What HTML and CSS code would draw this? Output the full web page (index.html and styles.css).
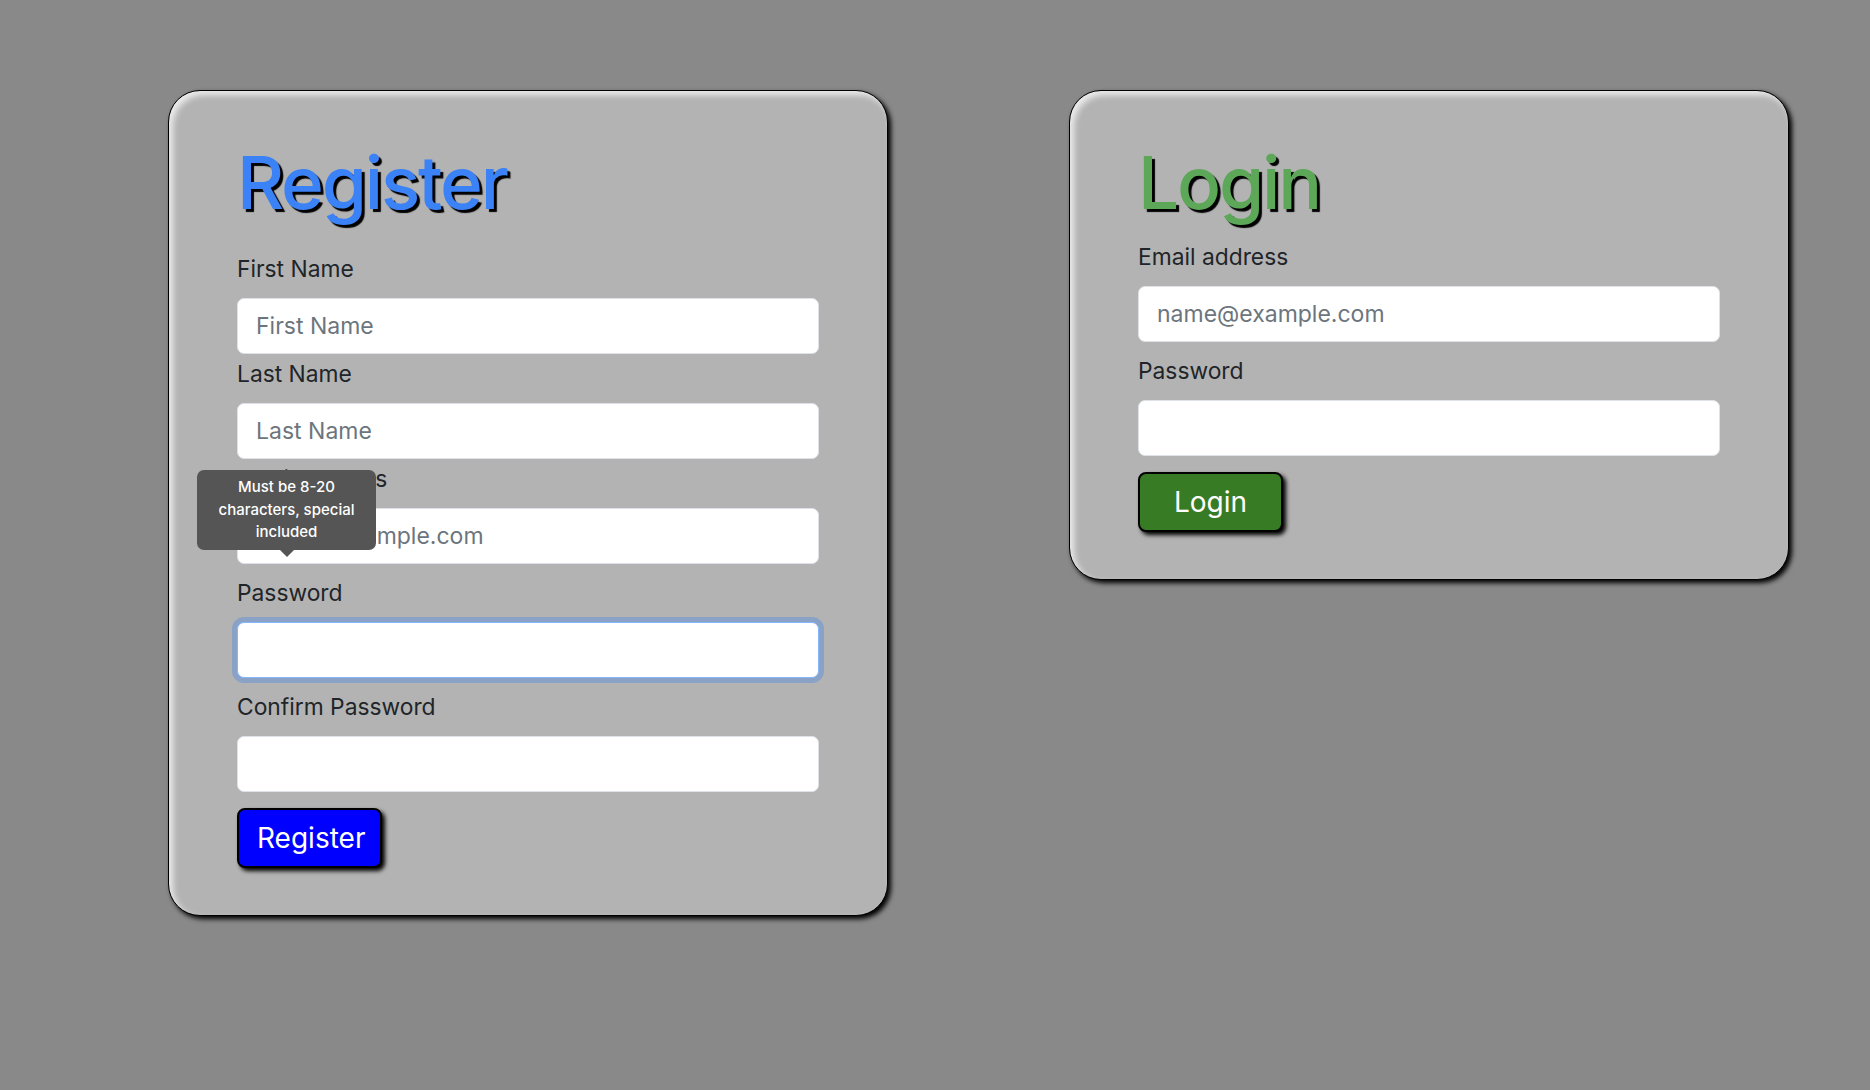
FILE: index.html
```html
<!DOCTYPE html>
<html lang="en">
<head>
<meta charset="utf-8">
<title>Register / Login</title>
<link rel="stylesheet" href="styles.css">
</head>
<body>
<main class="page">
  <section class="card card-register">
    <h1 class="title title-register">Register</h1>
    <form class="form">
      <div class="field field-tight">
        <label class="label" for="fn">First Name</label>
        <input class="input" id="fn" type="text" placeholder="First Name">
      </div>
      <div class="field field-tight">
        <label class="label" for="ln">Last Name</label>
        <input class="input" id="ln" type="text" placeholder="Last Name">
      </div>
      <div class="field">
        <label class="label" for="em">Email address</label>
        <input class="input" id="em" type="email" placeholder="name@example.com">
      </div>
      <div class="field">
        <label class="label" for="pw">Password</label>
        <input class="input input-focus" id="pw" type="password">
      </div>
      <div class="field field-last">
        <label class="label" for="cpw">Confirm Password</label>
        <input class="input" id="cpw" type="password">
      </div>
      <button class="btn btn-blue" type="button">Register</button>
    </form>
    <div class="tooltip">Must be 8-20 characters, special included</div>
  </section>

  <section class="card card-login">
    <h1 class="title title-login">Login</h1>
    <form class="form">
      <div class="field">
        <label class="label" for="lem">Email address</label>
        <input class="input" id="lem" type="email" placeholder="name@example.com">
      </div>
      <div class="field field-last">
        <label class="label" for="lpw">Password</label>
        <input class="input" id="lpw" type="password">
      </div>
      <button class="btn btn-green" type="button">Login</button>
    </form>
  </section>
</main>
</body>
</html>
```

FILE: styles.css
```css
* {
  box-sizing: border-box;
}

html, body {
  margin: 0;
  padding: 0;
}

body {
  background: #898989;
  font-family: Inter, "Noto Sans", "Liberation Sans", sans-serif;
  color: #212529;
  width: 1870px;
  height: 1090px;
  overflow: hidden;
}

.page {
  display: flex;
  align-items: flex-start;
  gap: 181px;
  padding: 90px 0 0 168px;
}

.card {
  position: relative;
  width: 720px;
  background: #b3b3b3;
  border: 1px solid #000;
  border-radius: 32px;
  padding: 47px 68px 47px;
  box-shadow: 3px 3px 5px #000, inset 4px 4px 6px rgba(255, 255, 255, 0.75);
}

.title {
  margin: 0;
  font-size: 73px;
  line-height: 89px;
  font-weight: 500;
  letter-spacing: -2.2px;
  text-shadow: 3px 3px 1px #000;
}

.title-register {
  color: #3b82f6;
  margin-bottom: 25px;
}

.title-login {
  color: #5ca858;
  margin-bottom: 13px;
}

.form {
  display: flex;
  flex-direction: column;
  align-items: flex-start;
}

.field {
  width: 100%;
  display: flex;
  flex-direction: column;
  margin-bottom: 12px;
}

.field-tight {
  margin-bottom: 3px;
}

.field-last {
  margin-bottom: 16px;
}

.label {
  font-size: 22.8px;
  line-height: 33px;
  margin-bottom: 13px;
  color: #212529;
}

.input {
  width: 100%;
  height: 56px;
  background: #fff;
  border: 1px solid #dee2e6;
  border-radius: 7px;
  padding: 0 18px;
  font-family: inherit;
  font-size: 23px;
  color: #212529;
  outline: none;
}

.input::placeholder {
  color: #6c757d;
  opacity: 1;
}

.input-focus {
  border-color: #86b7fe;
  box-shadow: 0 0 0 5px rgba(13, 110, 253, 0.25);
}

.btn {
  height: 60px;
  padding: 0 18px;
  border: 2px solid #000;
  border-radius: 8px;
  font-family: inherit;
  font-size: 28px;
  color: #fff;
  box-shadow: 3px 3px 4px #000;
  cursor: pointer;
}

.btn-blue {
  background: #0000ff;
  width: 145px;
}

.btn-green {
  background: #387b25;
  width: 145px;
}

.tooltip {
  position: absolute;
  left: 28px;
  top: 379px;
  width: 179px;
  padding: 6px 10px;
  background: #555;
  color: #fff;
  border-radius: 7px;
  font-size: 15px;
  line-height: 22.5px;
  font-weight: 500;
  text-align: center;
}

.tooltip::after {
  content: "";
  position: absolute;
  left: 50%;
  bottom: -7px;
  margin-left: -7px;
  border-left: 7px solid transparent;
  border-right: 7px solid transparent;
  border-top: 7px solid #555;
}
```
